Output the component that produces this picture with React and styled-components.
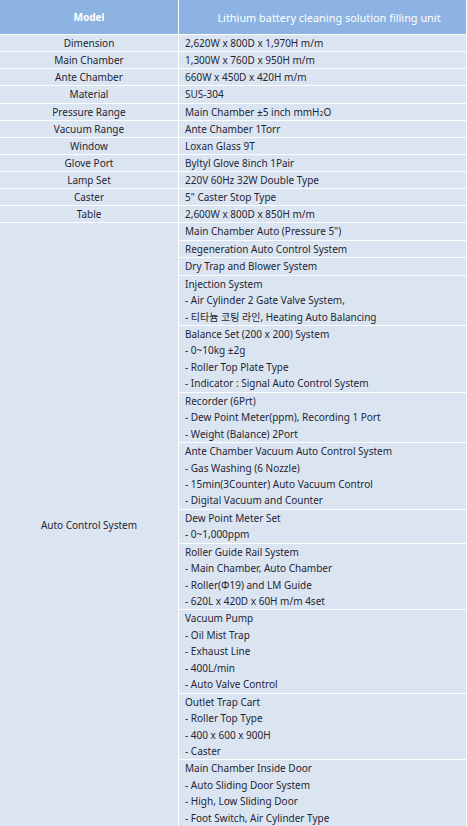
import React from 'react';
import styled, { createGlobalStyle } from 'styled-components';

const GlobalStyle = createGlobalStyle`
  html, body {
    margin: 0;
    padding: 0;
    background: #ffffff;
  }
  body {
    font-family: "Noto Sans", "Noto Sans CJK KR", sans-serif;
  }
`

const SpecSheet = styled.div`
  display: grid;
  grid-template-columns: 178px 287px;
  grid-template-rows: 34px repeat(11, 16.14px);
  grid-auto-rows: auto;
  gap: 1px;
  width: 466px;
  padding-right: 1px;
  background: #ffffff;
`

const HeadCell = styled.div`
  background: #8db3e2;
  color: #ffffff;
  display: flex;
  align-items: center;
  justify-content: center;
  padding-left: ${p => p.$wide ? '13px' : '0'};
  font-size: ${p => p.$wide ? '10.9px' : '10px'};
  font-weight: ${p => p.$wide ? 400 : 700};
`

const LabelCell = styled.div`
  background: #dbe5f1;
  color: #1f2635;
  font-size: 10px;
  line-height: 16.14px;
  text-align: center;
  white-space: nowrap;
`

const ValueCell = styled.div`
  background: #dbe5f1;
  color: #1f2635;
  font-size: 10px;
  line-height: 16.14px;
  padding-left: 6px;
  white-space: nowrap;
`

const GroupLabel = styled(LabelCell)`
  grid-row: span ${p => p.$span};
  display: flex;
  align-items: center;
  justify-content: center;
`

const GroupCell = styled(ValueCell)`
  line-height: 16.45px;
`

const Line = styled.div`
  height: 16.45px;
`

const Sub = styled.span`
  font-size: 7px;
`

const specs = [
  ['Dimension', '2,620W x 800D x 1,970H m/m'],
  ['Main Chamber', '1,300W x 760D x 950H m/m'],
  ['Ante Chamber', '660W x 450D x 420H m/m'],
  ['Material', 'SUS-304'],
  ['Pressure Range', <>Main Chamber ±5 inch mmH<Sub>2</Sub>O</>],
  ['Vacuum Range', 'Ante Chamber 1Torr'],
  ['Window', 'Loxan Glass 9T'],
  ['Glove Port', 'Byltyl Glove 8inch 1Pair'],
  ['Lamp Set', '220V 60Hz 32W Double Type'],
  ['Caster', '5" Caster Stop Type'],
  ['Table', '2,600W x 800D x 850H m/m'],
];

const controls = [
  ['Main Chamber Auto (Pressure 5")'],
  ['Regeneration Auto Control System'],
  ['Dry Trap and Blower System'],
  ['Injection System', '- Air Cylinder 2 Gate Valve System,', '- 티타늄 코팅 라인, Heating Auto Balancing'],
  ['Balance Set (200 x 200) System', '- 0~10kg ±2g', '- Roller Top Plate Type', '- Indicator : Signal Auto Control System'],
  ['Recorder (6Prt)', '- Dew Point Meter(ppm), Recording 1 Port', '- Weight (Balance) 2Port'],
  ['Ante Chamber Vacuum Auto Control System', '- Gas Washing (6 Nozzle)', '- 15min(3Counter) Auto Vacuum Control', '- Digital Vacuum and Counter'],
  ['Dew Point Meter Set', '- 0~1,000ppm'],
  ['Roller Guide Rail System', '- Main Chamber, Auto Chamber', '- Roller(Φ19) and LM Guide', '- 620L x 420D x 60H m/m 4set'],
  ['Vacuum Pump', '- Oil Mist Trap', '- Exhaust Line', '- 400L/min', '- Auto Valve Control'],
  ['Outlet Trap Cart', '- Roller Top Type', '- 400 x 600 x 900H', '- Caster'],
  ['Main Chamber Inside Door', '- Auto Sliding Door System', '- High, Low Sliding Door', '- Foot Switch, Air Cylinder Type'],
];

const App = () => {
  return (
    <>
      <GlobalStyle />
      <SpecSheet>
        <HeadCell>Model</HeadCell>
        <HeadCell $wide>Lithium battery cleaning solution filling unit</HeadCell>

        {specs.map(([label, value]) => (
          <React.Fragment key={label}>
            <LabelCell>{label}</LabelCell>
            <ValueCell>{value}</ValueCell>
          </React.Fragment>
        ))}

        <GroupLabel $span={controls.length}>Auto Control System</GroupLabel>
        {controls.map((lines, i) => (
          <GroupCell key={i}>
            {lines.map((line, j) => <Line key={j}>{line}</Line>)}
          </GroupCell>
        ))}
      </SpecSheet>
    </>
  )
}

export default App;
